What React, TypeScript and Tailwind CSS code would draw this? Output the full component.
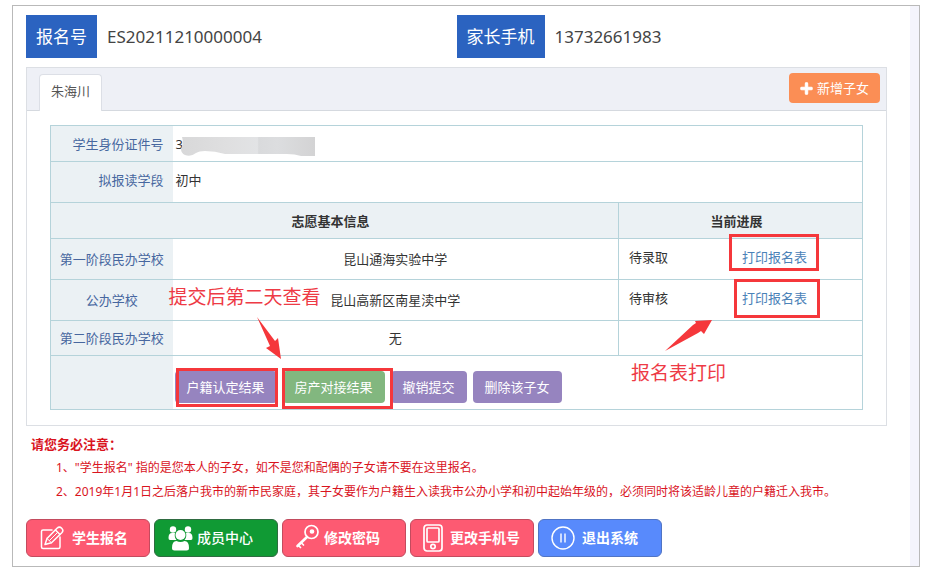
import type { ReactNode } from 'react'
import { FaPlus } from 'react-icons/fa'

const wishes = [
  { stage: '第一阶段民办学校', school: '昆山通海实验中学', status: '待录取' },
  { stage: '公办学校', school: '昆山高新区南星渎中学', status: '待审核' },
]

export default function App() {
  return (
    <div className="bg-white pt-[5px] pr-[14px] pb-1 pl-3 font-['Noto_Sans','Noto_Sans_CJK_SC',sans-serif] text-[13px] leading-5 text-[#333]">
      <div className="flex border border-[#b9b9b9]">
        <main className="min-w-0 flex-1 pt-[9px] pr-[23px] pb-[9px] pl-[13px]">
          {/* account info */}
          <div className="grid grid-cols-2 text-[17px] leading-[43px]">
            <InfoItem label="报名号" value="ES20211210000004" />
            <InfoItem label="家长手机" value="13732661983" />
          </div>

          {/* child panel */}
          <section className="mt-[9px] border border-[#dcdfe4]">
            <div className="flex items-start justify-between border-b border-[#d5d9df] bg-[#eef0f6] pt-[5px] pr-1.5 pl-3">
              <button className="mt-px -mb-px h-[37px] rounded-t border border-b-0 border-[#dcdfe6] bg-white px-[11px] pb-1 text-[#555]">
                朱海川
              </button>
              <button className="flex h-[30px] items-center gap-1 rounded bg-[#fb8e55] px-[11px] text-white">
                <FaPlus size={13} stroke="currentColor" strokeWidth={40} />
                新增子女
              </button>
            </div>
            <div className="px-[23px] pt-[14px] pb-[15px]">
              <StudentTable />
            </div>
          </section>

          {/* notice */}
          <div className="mt-1.5 pl-[5px] text-xs leading-6 text-[#d9141e]">
            <p className="text-[13px] leading-6 font-bold">请您务必注意：</p>
            <ol className="pl-[25px]">
              <li>1、"学生报名" 指的是您本人的子女，如不是您和配偶的子女请不要在这里报名。</li>
              <li>2、2019年1月1日之后落户我市的新市民家庭，其子女要作为户籍生入读我市公办小学和初中起始年级的，必须同时将该适龄儿童的户籍迁入我市。</li>
            </ol>
          </div>

          {/* main menu */}
          <nav className="mt-[15px] flex gap-1 text-sm font-bold text-white">
            <button className="flex h-[38px] w-[124px] items-center gap-2 rounded-md border border-[#c34b5e] bg-[#fd5a72] pl-[13px]">
              <EditIcon />
              学生报名
            </button>
            <button className="flex h-[38px] w-[124px] items-center gap-1 rounded-md border border-[#2f6b41] bg-[#109a34] pl-[13px] font-medium">
              <MembersIcon />
              成员中心
            </button>
            <button className="flex h-[38px] w-[124px] items-center gap-1 rounded-md border border-[#c34b5e] bg-[#fd5a72] pl-3">
              <KeyIcon />
              修改密码
            </button>
            <button className="flex h-[38px] w-[124px] items-center gap-1.5 rounded-md border border-[#c34b5e] bg-[#fd5a72] pl-[11px]">
              <PhoneIcon />
              更改手机号
            </button>
            <button className="flex h-[38px] w-[124px] items-center gap-1.5 rounded-md border border-[#5074c4] bg-[#588afc] pl-[11px]">
              <PauseIcon />
              退出系统
            </button>
          </nav>
        </main>
        <div className="w-[9px] bg-[#f4f4fc]" />
      </div>
    </div>
  )
}

function InfoItem({ label, value }: { label: string; value: string }) {
  return (
    <div className="flex">
      <span className="bg-[#2b63c0] px-[10px] text-white">{label}</span>
      <span className="pl-[10px] text-[#444]">{value}</span>
    </div>
  )
}

function StudentTable() {
  return (
    <table className="w-full table-fixed border-collapse border border-[#b5d3da]">
      <colgroup>
        <col className="w-[122px]" />
        <col />
        <col className="w-[244px]" />
      </colgroup>
      <tbody>
        <tr className="h-[36px] border-b border-[#b5d3da]">
          <th scope="row" className="bg-[#ebf1f4] pr-[9px] text-right font-normal text-[#47679f]">学生身份证件号</th>
          <td colSpan={2} className="pl-[3px]">
            <div className="relative flex">
              3
              <Smudge />
            </div>
          </td>
        </tr>
        <tr className="h-[41px] border-b border-[#b5d3da]">
          <th scope="row" className="bg-[#ebf1f4] pr-[9px] pb-1 text-right font-normal text-[#47679f]">拟报读学段</th>
          <td colSpan={2} className="pb-1 pl-[3px]">初中</td>
        </tr>
        <tr className="h-[36px] border-b border-[#b5d3da] bg-[#ebf1f4]">
          <th scope="col" colSpan={2} className="pr-2 font-bold">志愿基本信息</th>
          <th scope="col" className="border-l border-[#b5d3da] pr-2 font-bold">当前进展</th>
        </tr>
        {wishes.map((w, i) => (
          <tr key={w.stage} className="h-[41px] border-b border-[#b5d3da]">
            <th scope="row" className="bg-[#ebf1f4] text-center font-normal text-[#47679f]">{w.stage}</th>
            <td className="relative text-center">
              {w.school}
              {i === 1 && (
                <>
                  <p className="absolute top-[3px] -left-1 text-[19px] leading-7 text-[#ee3a45]">提交后第二天查看</p>
                  <svg className="absolute top-[37px] left-[84px]" width="26" height="42" viewBox="0 0 26 42" fill="#f5373b">
                    <path d="M0 0 L18 24 L21 21 L24 42 L9 31 L13 29 Z" />
                  </svg>
                </>
              )}
            </td>
            <td className="border-l border-[#b5d3da] pb-1">
              <div className="flex pl-[10px]">
                <span className="w-[113px]">{w.status}</span>
                <span className="relative">
                  <a href="#print" className="text-[#4b82b8]">打印报名表</a>
                  {i === 0
                    ? <Mark className="-top-[13px] -right-3 -bottom-1 -left-[13px]" />
                    : <Mark className="-top-[9px] -right-[13px] -bottom-[10px] -left-2" />}
                </span>
              </div>
            </td>
          </tr>
        ))}
        <tr className="h-[35px] border-b border-[#b5d3da]">
          <th scope="row" className="bg-[#ebf1f4] text-center font-normal text-[#47679f]">第二阶段民办学校</th>
          <td className="text-center">无</td>
          <td className="relative border-l border-[#b5d3da]">
            <svg className="absolute -top-px left-[46px]" width="48" height="32" viewBox="0 0 48 32" fill="#f5373b">
              <path d="M0 31 L28 5 L31 3 L30 1 L47 0 L39 14 L36 11 L33 13 Z" />
            </svg>
            <p className="absolute top-[38px] left-3 text-[19px] leading-7 text-[#ee3a45]">报名表打印</p>
          </td>
        </tr>
        <tr className="h-[54px]">
          <td className="bg-[#ebf1f4]" />
          <td colSpan={2} className="pt-2 pl-0.5">
            <div className="flex gap-1.5">
              <ActionButton>
                户籍认定结果
                <Mark className="-top-[3px] -right-px -bottom-1 left-px" />
              </ActionButton>
              <ActionButton green>
                房产对接结果
                <Mark className="-top-[3px] -right-2 -bottom-1.5 -left-px" />
              </ActionButton>
              <ActionButton>撤销提交</ActionButton>
              <ActionButton>删除该子女</ActionButton>
            </div>
          </td>
        </tr>
      </tbody>
    </table>
  )
}

function ActionButton({ children, green }: { children: ReactNode; green?: boolean }) {
  return (
    <button className={`relative h-8 rounded px-3 text-white ${green ? 'z-10 bg-[#82b77f]' : 'bg-[#9684bf]'}`}>
      {children}
    </button>
  )
}

// red highlight frame drawn over its parent
function Mark({ className }: { className: string }) {
  return <span className={`pointer-events-none absolute border-3 border-[#f5373b] ${className}`} />
}

// covers the rest of the id number
function Smudge() {
  return (
    <svg className="absolute top-[3px] left-[5px]" width="134" height="20" viewBox="0 0 134 20">
      <defs>
        <linearGradient id="smudge">
          <stop offset="0" stopColor="#d8d8d9" />
          <stop offset="0.35" stopColor="#dfdfe0" />
          <stop offset="0.57" stopColor="#e2e3e5" />
          <stop offset="0.58" stopColor="#d9dadc" />
          <stop offset="0.72" stopColor="#dcdddf" />
          <stop offset="1" stopColor="#d3d3d4" />
        </linearGradient>
      </defs>
      <path fill="url(#smudge)" d="M1 0 H134 V19 H120 Q114 17 106 17 H44 Q34 14 24 14 Q18 14 15 16 Q10 20 4 18 Q0 16 0 12 Q3 6 1 0 Z" />
    </svg>
  )
}

/* ── Icons ── */

function EditIcon() {
  return (
    <svg width="24" height="24" viewBox="0 0 24 24" fill="none" stroke="currentColor" strokeWidth="1.500" strokeLinejoin="round" strokeLinecap="round">
      <path d="M12 4 H3 Q1.500 4 1.500 5.500 V21 Q1.500 22.500 3 22.500 H18.500 Q20 22.500 20 21 V11" />
      <path d="M5 18.500 L7 12.500 L17 2.200 Q19.500 0 21.700 2.200 Q24 4.500 21.800 6.800 L11.500 16.800 Z" />
      <path d="M15.500 4 L20 8.500" />
      <path strokeWidth="1" d="M7 12.500 L11.500 16.800 M9.500 14.500 L17.500 6.500" />
    </svg>
  )
}

function MembersIcon() {
  return (
    <svg width="25" height="25" viewBox="0 0 25 25" fill="currentColor">
      <circle cx="5" cy="3.500" r="3.200" />
      <circle cx="20" cy="3.500" r="3.200" />
      <path d="M0.500 12 Q0.500 7 4 7 H7 Q6 11 8.500 14 H2 Q0.500 14 0.500 12 Z" />
      <path d="M24.500 12 Q24.500 7 21 7 H18 Q19 11 16.500 14 H23 Q24.500 14 24.500 12 Z" />
      <circle cx="12.500" cy="9" r="5" />
      <path d="M4 22 Q4 15 8.500 15 Q12.500 17 16.500 15 Q21 15 21 22 Q21 24.500 18.500 24.500 H6.500 Q4 24.500 4 22 Z" />
    </svg>
  )
}

function KeyIcon() {
  return (
    <svg className="-mt-1" width="25" height="25" viewBox="0 0 25 25" fill="none" stroke="currentColor" strokeWidth="1.700" strokeLinecap="round" strokeLinejoin="round">
      <circle cx="16.500" cy="8" r="6.500" />
      <circle cx="17" cy="7.500" r="1.500" fill="currentColor" />
      <path strokeWidth="2.600" d="M12 13 L2.500 22" />
      <path d="M6.500 19 L8.500 21 M3.500 21.500 L5.500 23.500" />
    </svg>
  )
}

function PhoneIcon() {
  return (
    <svg width="22" height="28" viewBox="0 0 22 28" fill="none" stroke="currentColor" strokeWidth="1.700">
      <rect x="2" y="1" width="18" height="26" rx="3" />
      <rect x="5" y="4" width="12" height="14" rx="1" />
      <circle cx="11" cy="22.500" r="2.200" />
    </svg>
  )
}

function PauseIcon() {
  return (
    <svg width="26" height="26" viewBox="0 0 26 26" fill="none" stroke="currentColor" strokeWidth="1.400">
      <circle cx="13" cy="13" r="11" />
      <path d="M11 8.500 V17.500 M15 8.500 V17.500" />
    </svg>
  )
}
